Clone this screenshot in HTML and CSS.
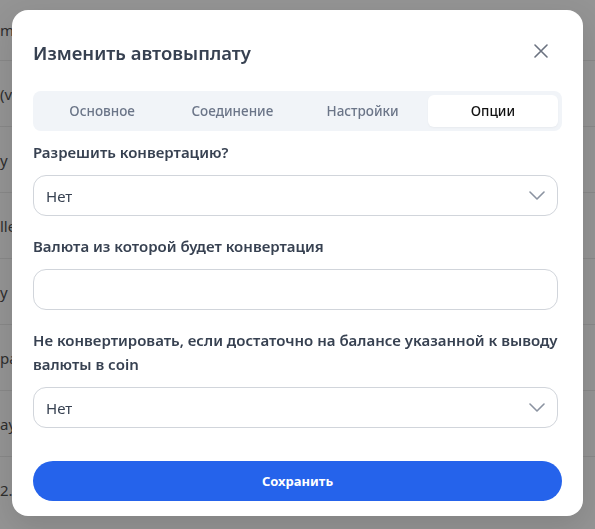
FILE: index.html
```html
<!DOCTYPE html>
<html lang="ru">
<head>
<meta charset="utf-8">
<title>Изменить автовыплату</title>
<link rel="stylesheet" href="styles.css">
</head>
<body>
<div class="page">
  <div class="row first"><span class="cell">m</span></div>
  <div class="row"><span class="cell">(v</span></div>
  <div class="row"><span class="cell">y</span></div>
  <div class="row"><span class="cell">lle</span></div>
  <div class="row"><span class="cell">y</span></div>
  <div class="row"><span class="cell">pa</span></div>
  <div class="row"><span class="cell">ay</span></div>
  <div class="row last"><span class="cell">2.0</span></div>
</div>

<div class="overlay">
  <div class="modal">
    <div class="modal-header">
      <h2 class="modal-title">Изменить автовыплату</h2>
      <button class="close-btn" aria-label="Закрыть">
        <svg width="14" height="14" viewBox="0 0 14 14"><path d="M1 1L13 13M13 1L1 13" stroke="#6b7280" stroke-width="1.6" stroke-linecap="round"/></svg>
      </button>
    </div>

    <div class="tabs">
      <div class="tab">Основное</div>
      <div class="tab">Соединение</div>
      <div class="tab">Настройки</div>
      <div class="tab active">Опции</div>
    </div>

    <div class="form">
      <div class="field">
        <label class="label">Разрешить конвертацию?</label>
        <div class="control select">
          <span>Нет</span>
          <svg width="16" height="9" viewBox="0 0 16 9"><path d="M1 1L8 8L15 1" fill="none" stroke="#8b93a1" stroke-width="1.6" stroke-linecap="round" stroke-linejoin="round"/></svg>
        </div>
      </div>
      <div class="field">
        <label class="label">Валюта из которой будет конвертация</label>
        <div class="control input"></div>
      </div>
      <div class="field">
        <label class="label">Не конвертировать, если достаточно на балансе указанной к выводу валюты в coin</label>
        <div class="control select">
          <span>Нет</span>
          <svg width="16" height="9" viewBox="0 0 16 9"><path d="M1 1L8 8L15 1" fill="none" stroke="#8b93a1" stroke-width="1.6" stroke-linecap="round" stroke-linejoin="round"/></svg>
        </div>
      </div>
    </div>

    <button class="save-btn">Сохранить</button>
  </div>
</div>
</body>
</html>
```

FILE: styles.css
```css
* { box-sizing: border-box; }
html, body { margin: 0; padding: 0; }
body {
  width: 595px;
  height: 529px;
  overflow: hidden;
  background: #949494;
  font-family: "Noto Sans", "Open Sans", sans-serif;
}

.page {
  display: flex;
  flex-direction: column;
}
.row {
  height: 66px;
  border-bottom: 1px solid #888888;
  display: flex;
  align-items: center;
}
.row.first { height: 61px; }
.row.last { border-bottom: none; }
.cell {
  white-space: nowrap;
  color: #2e2e2e;
  font-size: 15px;
}

.overlay {
  position: fixed;
  inset: 0;
  display: flex;
  align-items: flex-start;
  justify-content: center;
  padding-top: 10px;
}
.modal {
  width: 571px;
  background: #ffffff;
  border-radius: 16px;
  padding: 29px 21px 15px;
  box-shadow: 0 10px 30px rgba(0,0,0,0.12);
  display: flex;
  flex-direction: column;
}
.modal-header {
  height: 28px;
  display: flex;
  align-items: center;
  justify-content: space-between;
}
.modal-title {
  margin: 0;
  font-size: 18.5px;
  font-weight: 600;
  color: #374151;
  line-height: 28px;
}
.close-btn {
  border: none;
  background: transparent;
  padding: 0;
  width: 14px;
  height: 14px;
  margin-right: 14px;
  margin-top: -4px;
  display: flex;
}

.tabs {
  margin-top: 24px;
  height: 40px;
  background: #f1f4f8;
  border-radius: 8px;
  padding: 4px;
  display: grid;
  grid-template-columns: repeat(4, 1fr);
}
.tab {
  display: flex;
  align-items: center;
  justify-content: center;
  font-size: 13.5px;
  font-weight: 500;
  color: #6b7588;
  border-radius: 6px;
}
.tab.active {
  background: #ffffff;
  color: #111111;
  box-shadow: 0 1px 2px rgba(0,0,0,0.04);
}

.form {
  padding-top: 9px;
  display: flex;
  flex-direction: column;
  gap: 18px;
}
.field {
  display: flex;
  flex-direction: column;
  gap: 11px;
}
.label {
  font-size: 15px;
  font-weight: 600;
  color: #374151;
  line-height: 24px;
}
.control {
  height: 41px;
  margin-right: 4px;
  border: 1px solid #d1d5db;
  border-radius: 13px;
  background: #ffffff;
  display: flex;
  align-items: center;
  justify-content: space-between;
  padding: 0 12px 0 12px;
  font-size: 15px;
  color: #374151;
}

.save-btn {
  margin-top: 33px;
  height: 40px;
  border: none;
  border-radius: 20px;
  background: #2563eb;
  color: #ffffff;
  font-family: "Noto Sans", "Open Sans", sans-serif;
  font-size: 13px;
  font-weight: 700;
}
```
